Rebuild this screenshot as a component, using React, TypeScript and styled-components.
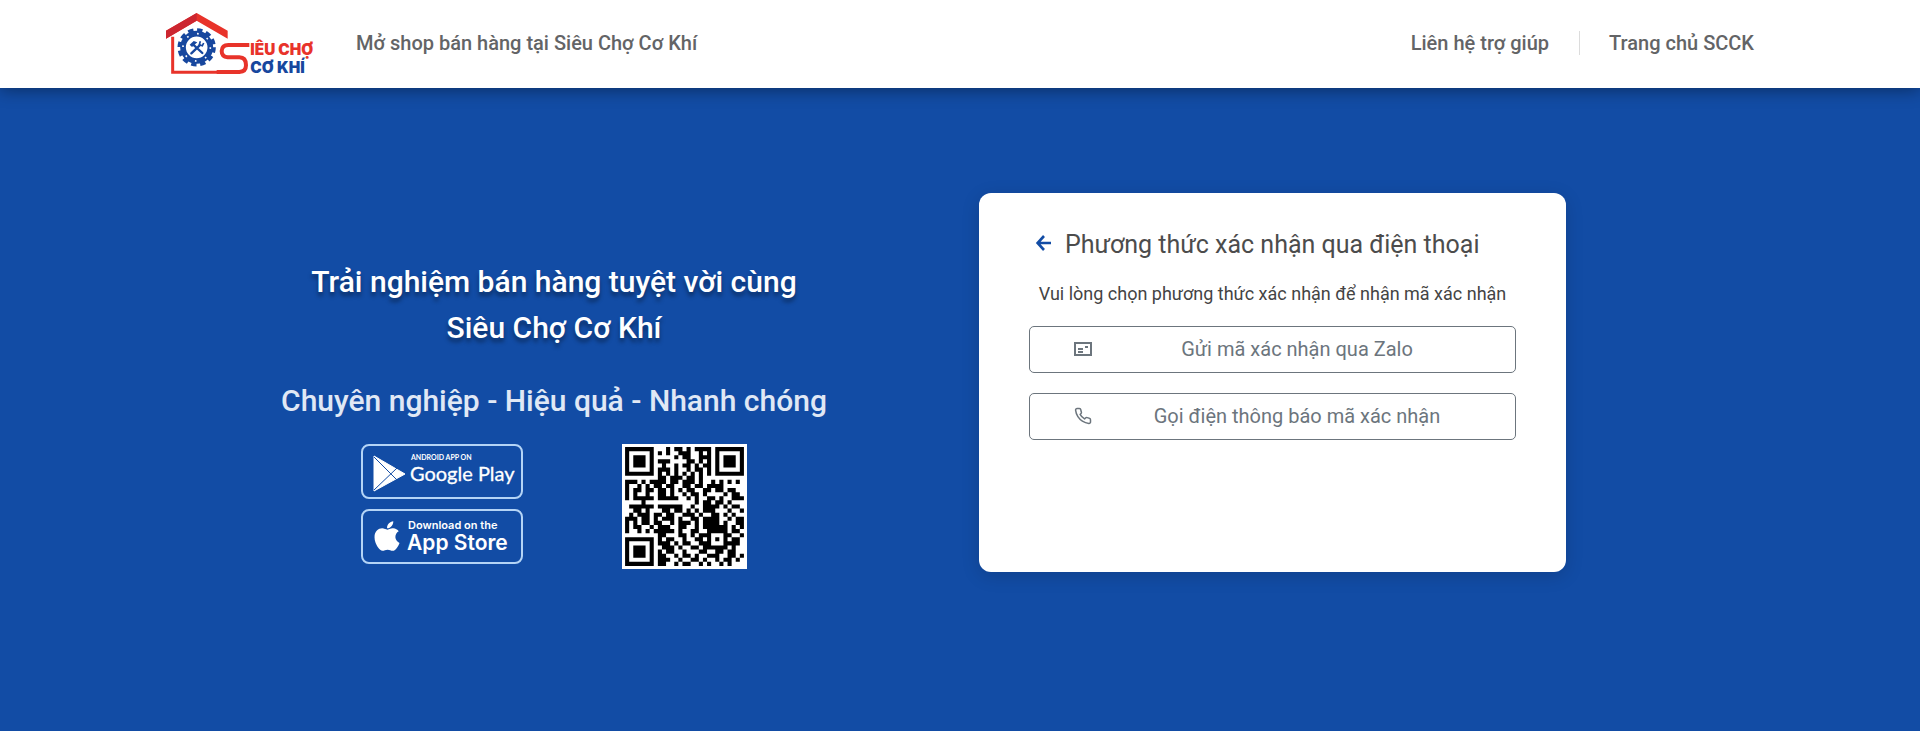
import React from "react";
import styled, { createGlobalStyle } from "styled-components";
import { FiPhone } from "react-icons/fi";
import { FaApple } from "react-icons/fa";

const GlobalStyle = createGlobalStyle`
  * { box-sizing: border-box; }
  body {
    margin: 0;
    background: #124ca5;
    font-family: Roboto, "Noto Sans", sans-serif;
  }
`;

const Page = styled.div`
  display: flex;
  flex-direction: column;
  min-height: 100vh;
`;

const Header = styled.header`
  background: #fff;
  box-shadow: 0 2px 16px rgba(0, 0, 0, 0.4);
`;

const HeaderInner = styled.div`
  display: flex;
  align-items: center;
  max-width: 1600px;
  height: 88px;
  margin: 0 auto;
  padding: 0 6px 2px 5px;
`;

const LogoLink = styled.a`
  display: flex;
  margin-right: 38px;
`;

const HeaderTitle = styled.p`
  margin: 0;
  color: #636466;
  font-size: 20px;
  font-weight: 500;
  line-height: 24px;
`;

const HeaderNav = styled.nav`
  display: flex;
  align-items: center;
  margin-left: auto;
`;

const NavLink = styled.a`
  color: #636466;
  font-size: 20px;
  font-weight: 500;
  line-height: 24px;
  text-decoration: none;

  & + & {
    margin-left: 30px;
    padding-left: 29px;
    border-left: 1px solid #dcdcdc;
  }
`;

const Hero = styled.main`
  display: grid;
  grid-template-columns: minmax(0, 788px) minmax(0, 587px);
  column-gap: 31px;
  align-items: start;
  width: 100%;
  max-width: 1600px;
  margin: 0 auto;
  padding: 105px 0 60px;
`;

const Intro = styled.section`
  display: flex;
  flex-direction: column;
  align-items: center;
  padding-top: 66px;
  text-align: center;
`;

const Headline = styled.h1`
  margin: 0;
  color: #fff;
  font-size: 30px;
  font-weight: 500;
  line-height: 46px;
  text-shadow: 0 4px 4px rgba(0, 0, 0, 0.4);
`;

const Slogan = styled.p`
  margin: 27px 0 20px;
  color: #e0e8f5;
  font-size: 30px;
  font-weight: 500;
  line-height: 46px;
`;

const Downloads = styled.div`
  display: flex;
  gap: 99px;
`;

const Badges = styled.div`
  display: flex;
  flex-direction: column;
  gap: 10px;
`;

const Badge = styled.a`
  display: flex;
  width: 162px;
  height: 55px;
  border: 2px solid #b4d4f6;
  border-radius: 8px;
`;

const Card = styled.section`
  min-height: 379px;
  padding: 34px 50px;
  background: #fff;
  border-radius: 12px;
  box-shadow: 0 4px 18px rgba(0, 0, 0, 0.15);
`;

const CardHeader = styled.div`
  display: flex;
  align-items: center;
  gap: 11px;
  padding-left: 5px;
`;

const BackButton = styled.button`
  display: flex;
  padding: 0 0 4px;
  border: 0;
  background: none;
  color: #124ca5;
`;

const CardTitle = styled.h2`
  margin: 0;
  color: #4c4c4c;
  font-size: 25px;
  font-weight: 400;
  line-height: 36px;
`;

const Hint = styled.p`
  margin: 19px 0 20px;
  color: #444;
  font-size: 18px;
  font-weight: 400;
  line-height: 24px;
  text-align: center;
`;

const Methods = styled.div`
  display: flex;
  flex-direction: column;
  gap: 20px;
`;

const MethodButton = styled.button`
  display: grid;
  grid-template-columns: 106px 1fr;
  align-items: center;
  justify-items: center;
  width: 100%;
  height: 47px;
  padding: 0 57px 2px 0;
  border: 1px solid #6c757d;
  border-radius: 5px;
  background: #fff;
  color: #6c757d;
  font-family: inherit;
  font-size: 20px;
  line-height: 24px;
`;

function Logo() {
  return (
    <svg width="153" height="67" viewBox="45 30 459 201" role="img" aria-label="Siêu Chợ Cơ Khí">
      <path d="M48 92 L140 39 L233 92 V116 L140 62 L48 116Z" fill="#e8332a" />
      <path d="M48 92 L140 39 V62 L48 116Z" fill="#cc2630" />
      <path d="M68 110 V217 H265" fill="none" stroke="#e8332a" strokeWidth="9" />
      <path
        d="M200 216 H268 Q288 215 288 196 Q288 172 268 172 H233 Q215 170 215 153 Q216 135 235 135 H298"
        fill="none"
        stroke="#e8332a"
        strokeWidth="12"
      />
      <circle cx="140" cy="142" r="41" fill="none" stroke="#17479e" strokeWidth="17" />
      <circle cx="140" cy="142" r="52" fill="none" stroke="#17479e" strokeWidth="11" strokeDasharray="16 11.2" />
      <circle cx="140" cy="142" r="41" fill="none" stroke="#fff" strokeWidth="5" strokeDasharray="5 27.2" />
      <path d="M129 133 L157 159 M149 136 L124 160" stroke="#17479e" strokeWidth="7" strokeLinecap="round" />
      <path d="M119 134 L131 123 L142 127 L126 141Z" fill="#17479e" />
      <path d="M151 124 L148 134 L157 137 L161 129" fill="none" stroke="#17479e" strokeWidth="5" />
      <g fontFamily="Inter, sans-serif" fontWeight="900" fontSize="46">
        <text x="301" y="165" fill="#e8332a">IÊU CHỢ</text>
        <text x="301" y="218" fill="#17479e">CƠ KHÍ</text>
      </g>
    </svg>
  );
}

function GooglePlayArt() {
  return (
    <svg width="158" height="51" viewBox="0 0 158 51" role="img" aria-label="Android app on Google Play">
      <path d="M11 10 L42 28 L11 45Z" fill="#fff" stroke="#fff" strokeWidth="1" strokeLinejoin="round" />
      <path d="M11 11 L34 34 M11 44 L34 22" stroke="#124ca5" strokeWidth="1" />
      <g fill="#fff" fontFamily="Lato, sans-serif">
        <text x="48" y="14" fontSize="7" fontWeight="700">ANDROID APP ON</text>
        <text x="47" y="35" fontSize="20" stroke="#fff" strokeWidth="0.3">Google Play</text>
      </g>
    </svg>
  );
}

function AppStoreArt() {
  return (
    <svg width="158" height="51" viewBox="0 0 158 51" role="img" aria-label="Download on the App Store">
      <FaApple x={7} y={8} size={34} color="#fff" />
      <g fill="#fff" fontFamily="Inter, sans-serif">
        <text x="45" y="18" fontSize="11" fontWeight="600">Download on the</text>
        <text x="44" y="39" fontSize="21" fontWeight="600">App Store</text>
      </g>
    </svg>
  );
}

const QR_ROWS = [
  "#######...#.##.#.####.#######",
  "#.....#.#.#..###..#.#.#.....#",
  "#.###.#.....#.##..###.#.###.#",
  "#.###.#.###....##.#.#.#.###.#",
  "#.###.#..#..#.##.#.##.#.###.#",
  "#.....#.###.#..#.##.#.#.....#",
  "#######.#.#.#.#.#.#.#.#######",
  "........##.###.##.#..........",
  "###.#.####.##.###.#..#.#.#.#.",
  "#..#.#.##.##..##.##.####.....",
  "#.##.##.##.#.#.##..##.##.##..",
  "#.#..#..##.#..#.##.#....#.##.",
  "#.#####.#####..#.#..##.#..###",
  "....#............#.##.##.#...",
  ".######.######..#..####.#.##.",
  "..##.#...##.##.#.#.###...#..#",
  ".#.###.##.##..###.#..##.#.#..",
  "###.##.#.###.#..##.####..#.##",
  "#.#.##.##..#.###.#.####.#..##",
  "#.##..#.###..##..#.######.#.#",
  "#..#.#.#####.#..##..#####.##.",
  "........##...##.#.###...##..#",
  "#######.#.##..#..##.#.#.#.##.",
  "#.....#.###.#.##..###...####.",
  "#.###.#..###.#..##.######.#..",
  "#.###.#.#.##..#...##..##.##..",
  "#.###.#.##..#.##.#..###..##.#",
  "#.....#.###..#..##.#..#.##.#.",
  "#######.##..#.##..#.#..#.#...",
];

function QrCode() {
  const modules = QR_ROWS.flatMap((row, y) =>
    [...row].map((cell, x) => (cell === "#" ? `M${x} ${y}h1v1h-1z` : "")),
  ).join("");
  return (
    <svg width="125" height="125" viewBox="-0.75 -0.75 30.5 30.5" role="img" aria-label="QR">
      <rect x="-1" y="-1" width="31" height="31" fill="#fff" />
      <path d={modules} fill="#000" />
    </svg>
  );
}

function BackArrowIcon() {
  return (
    <svg width="20" height="20" viewBox="0 0 20 20" fill="none" stroke="currentColor" strokeWidth="2.6" aria-hidden="true">
      <path d="M17 10H4M10 3L3.6 10L10 17" />
    </svg>
  );
}

function ZaloCardIcon() {
  return (
    <svg width="20" height="16" viewBox="0 0 20 16" fill="none" stroke="currentColor" strokeWidth="2" aria-hidden="true">
      <path d="M2 2H18V14H2Z" />
      <path d="M5 8H10M5 11H10M12 6H15" />
    </svg>
  );
}

export default function App() {
  return (
    <Page>
      <GlobalStyle />
      <Header>
        <HeaderInner>
          <LogoLink href="#">
            <Logo />
          </LogoLink>
          <HeaderTitle>Mở shop bán hàng tại Siêu Chợ Cơ Khí</HeaderTitle>
          <HeaderNav>
            <NavLink href="#">Liên hệ trợ giúp</NavLink>
            <NavLink href="#">Trang chủ SCCK</NavLink>
          </HeaderNav>
        </HeaderInner>
      </Header>
      <Hero>
        <Intro>
          <Headline>
            Trải nghiệm bán hàng tuyệt vời cùng
            <br />
            Siêu Chợ Cơ Khí
          </Headline>
          <Slogan>Chuyên nghiệp - Hiệu quả - Nhanh chóng</Slogan>
          <Downloads>
            <Badges>
              <Badge href="#">
                <GooglePlayArt />
              </Badge>
              <Badge href="#">
                <AppStoreArt />
              </Badge>
            </Badges>
            <QrCode />
          </Downloads>
        </Intro>
        <Card>
          <CardHeader>
            <BackButton type="button" aria-label="Quay lại">
              <BackArrowIcon />
            </BackButton>
            <CardTitle>Phương thức xác nhận qua điện thoại</CardTitle>
          </CardHeader>
          <Hint>Vui lòng chọn phương thức xác nhận để nhận mã xác nhận</Hint>
          <Methods>
            <MethodButton type="button">
              <ZaloCardIcon />
              <span>Gửi mã xác nhận qua Zalo</span>
            </MethodButton>
            <MethodButton type="button">
              <FiPhone size={18} aria-hidden="true" />
              <span>Gọi điện thông báo mã xác nhận</span>
            </MethodButton>
          </Methods>
        </Card>
      </Hero>
    </Page>
  );
}
